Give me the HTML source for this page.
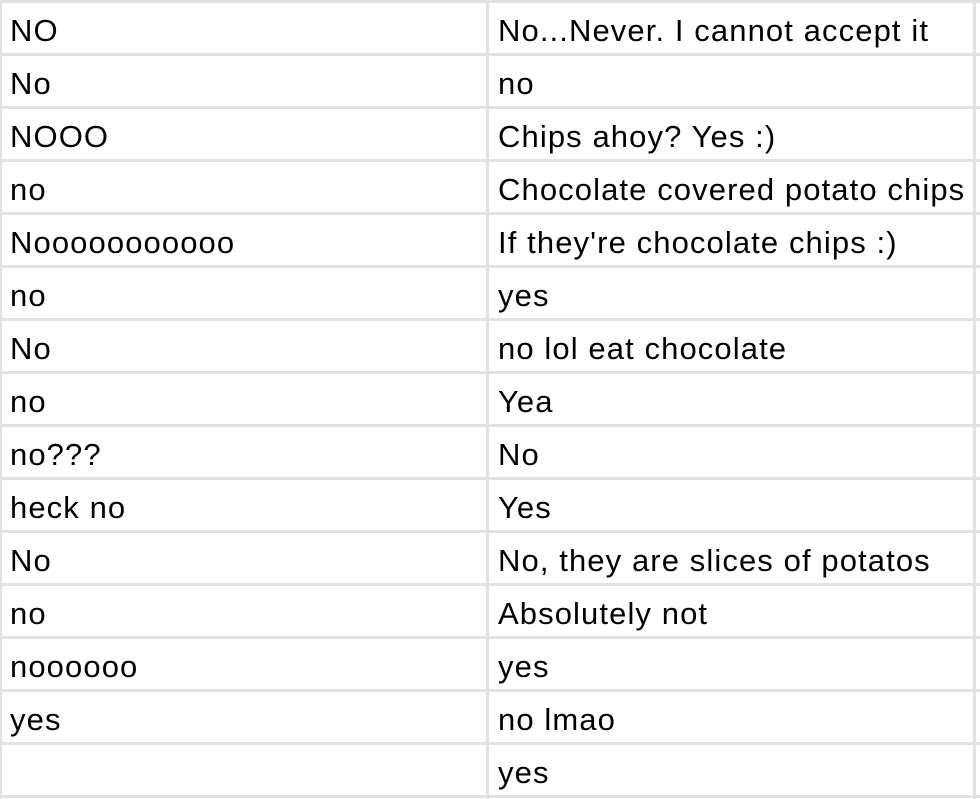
<!DOCTYPE html><html><head><style>
body{margin:0;width:980px;height:799px;background:#fff;position:relative;overflow:hidden;font-family:"Liberation Sans",Arial,sans-serif;font-size:31px;letter-spacing:1.1px;color:#000}
.h{position:absolute;left:0;width:980px;height:3px;background:#e2e2e2}
.v{position:absolute;top:0;height:799px;background:#e2e2e2}
.t{position:absolute;line-height:1;white-space:nowrap}
</style></head><body>
<div class="v" style="left:0;width:2px"></div>
<div class="v" style="left:486px;width:3px"></div>
<div class="v" style="left:973px;width:3px"></div>
<div id="c"></div>
<script>
var L=["NO","No","NOOO","no","Nooooooooooo","no","No","no","no???","heck no","No","no","noooooo","yes",""];
var R=["No...Never. I cannot accept it","no","Chips ahoy? Yes :)","Chocolate covered potato chips","If they're chocolate chips :)","yes","no lol eat chocolate","Yea","No","Yes","No, they are slices of potatos","Absolutely not","yes","no lmao","yes"];
var h="";
for(var i=0;i<16;i++)h+='<div class="h" style="top:'+(i*53)+'px"></div>';
for(var i=0;i<15;i++){var y=i*53+15;
h+='<div class="t" style="left:10px;top:'+y+'px">'+L[i]+'</div>';
h+='<div class="t" style="left:498px;top:'+y+'px">'+R[i]+'</div>';}
document.getElementById("c").innerHTML=h;
</script>
</body></html>
